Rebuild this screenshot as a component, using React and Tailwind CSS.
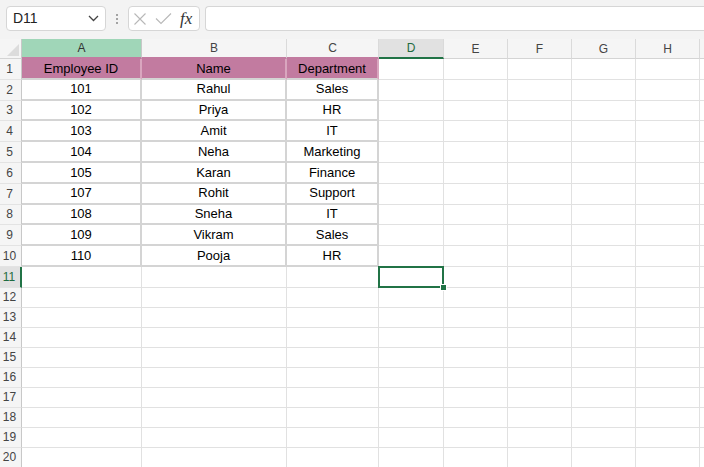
import React from "react";

const cols = [
  { key: "A", w: 120 },
  { key: "B", w: 145 },
  { key: "C", w: 92 },
  { key: "D", w: 65 },
  { key: "E", w: 64 },
  { key: "F", w: 64 },
  { key: "G", w: 64 },
  { key: "H", w: 64 },
  { key: "I", w: 64, label: "" },
];

const data = [
  ["Employee ID", "Name", "Department"],
  ["101", "Rahul", "Sales"],
  ["102", "Priya", "HR"],
  ["103", "Amit", "IT"],
  ["104", "Neha", "Marketing"],
  ["105", "Karan", "Finance"],
  ["107", "Rohit", "Support"],
  ["108", "Sneha", "IT"],
  ["109", "Vikram", "Sales"],
  ["110", "Pooja", "HR"],
];

function rowHeight(r) {
  if (r <= 10) return 20.8;
  if (r === 11) return 21;
  return 20;
}

function Toolbar() {
  return (
    <div className="h-[39px] bg-[#f3f3f3] flex items-start pt-[6px] pl-[6px]">
      <div className="w-[100px] h-[25px] bg-white border border-[#d6d6d6] rounded-[4px] flex items-center justify-between pl-[6px] pr-[6px]">
        <span className="text-[14px] text-[#222]">D11</span>
        <svg width="11" height="7" viewBox="0 0 11 7">
          <path d="M1 1 L5.5 5.5 L10 1" fill="none" stroke="#444" strokeWidth="1.3" />
        </svg>
      </div>
      <div className="w-[22px] h-[25px] flex flex-col items-center justify-center gap-[2px]">
        <span className="w-[2px] h-[2px] bg-[#888] rounded-full" />
        <span className="w-[2px] h-[2px] bg-[#888] rounded-full" />
        <span className="w-[2px] h-[2px] bg-[#888] rounded-full" />
      </div>
      <div className="w-[72px] h-[25px] bg-white border border-[#d6d6d6] rounded-[4px] flex items-center pl-[4px] gap-[8px]">
        <svg width="14" height="14" viewBox="0 0 14 14">
          <path d="M1.5 1.5 L12.5 12.5 M12.5 1.5 L1.5 12.5" stroke="#b8b8b8" strokeWidth="1.1" fill="none" />
        </svg>
        <svg width="17" height="13" viewBox="0 0 17 13">
          <path d="M1 6.5 L6 11.5 L16 1.5" stroke="#b8b8b8" strokeWidth="1.1" fill="none" />
        </svg>
        <span className="text-[17px] italic text-[#333] leading-none" style={{ fontFamily: '"Liberation Serif", serif' }}>
          fx
        </span>
      </div>
      <div className="ml-[5px] flex-1 h-[25px] bg-white border border-[#d6d6d6] rounded-l-[4px] border-r-0" />
    </div>
  );
}

function ColumnHeader() {
  return (
    <div className="flex h-[20px] bg-[#f5f5f5]">
      <div className="w-[22px] shrink-0 border-r border-[#c8c8c8] border-b border-b-[#d4d4d4] relative">
        <svg className="absolute right-[2px] bottom-[2px]" width="12" height="12" viewBox="0 0 12 12">
          <path d="M12 0 L12 12 L0 12 Z" fill="#dcdcdc" />
        </svg>
      </div>
      {cols.map((c) => {
        let cls = "border-r border-[#dadada] border-b border-b-[#d4d4d4] text-[#444]";
        if (c.key === "A") cls = "bg-[#a0d6b8] border-r border-[#c8c8c8] border-b-2 border-b-[#c27ba0] text-[#333]";
        if (c.key === "B" || c.key === "C") cls = "border-r border-[#dadada] border-b-2 border-b-[#c27ba0] text-[#444]";
        if (c.key === "D") cls = "bg-[#e1e1e1] border-r border-[#dadada] border-b-2 border-b-[#217346] text-[#1f6b40]";
        return (
          <div
            key={c.key}
            className={"shrink-0 flex items-center justify-center text-[12px] " + cls}
            style={{ width: c.w }}
          >
            {c.label !== undefined ? c.label : c.key}
          </div>
        );
      })}
    </div>
  );
}

function Row({ r }) {
  const h = rowHeight(r);
  const inTable = r <= 10;
  const sel = r === 11;
  return (
    <div className={"flex relative " + (sel ? "z-10" : "")} style={{ height: h }}>
      <div
        className={
          "w-[22px] shrink-0 flex items-center justify-center pr-[2px] text-[12px] border-b border-b-[#e3e3e3] " +
          (sel ? "bg-[#e1e1e1] border-r-2 border-r-[#217346] text-[#1f6b40]" : "bg-[#f5f5f5] border-r border-r-[#c8c8c8] text-[#444]")
        }
      >
        {r}
      </div>
      {cols.map((c, i) => {
        const tableCell = inTable && i < 3;
        const header = r === 1 && i < 3;
        const active = sel && c.key === "D";
        let cls = "border-r border-b border-[#e1e1e1]";
        if (tableCell) cls = "border-r-2 border-b-2 border-[#d4d4d4]";
        if (header) cls = "border-r-2 border-r-[#d9a6bf] border-b-2 border-b-[#d4d4d4] bg-[#c27ba0]";
        return (
          <div
            key={c.key}
            className={"shrink-0 flex items-center justify-center text-[13px] text-black relative " + cls + (active ? " z-10" : "")}
            style={{ width: c.w }}
          >
            {tableCell ? data[r - 1][i] : null}
            {active && (
              <div className="absolute left-[-1px] top-[-1px] right-[-1px] bottom-[-1px] border-2 border-[#217346]">
                <div className="absolute right-[-5px] bottom-[-5px] w-[7px] h-[7px] bg-[#217346] border border-white" />
              </div>
            )}
          </div>
        );
      })}
    </div>
  );
}

export default function App() {
  const rows = Array.from({ length: 20 }, (_, i) => i + 1);
  return (
    <div
      className="w-[704px] h-[467px] overflow-hidden bg-white"
      style={{ fontFamily: '"Liberation Sans", Arial, sans-serif' }}
    >
      <Toolbar />
      <ColumnHeader />
      {rows.map((r) => (
        <Row key={r} r={r} />
      ))}
    </div>
  );
}
